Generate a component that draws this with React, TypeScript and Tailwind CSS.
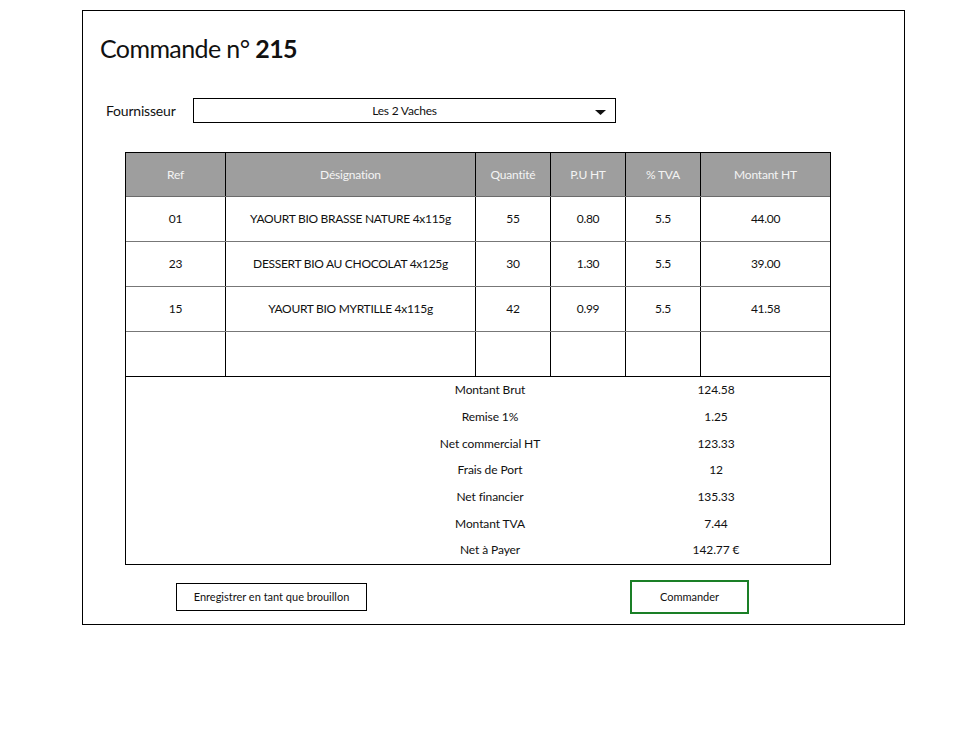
import React from "react";

const rows = [
  ["01", "YAOURT BIO BRASSE NATURE 4x115g", "55", "0.80", "5.5", "44.00"],
  ["23", "DESSERT BIO AU CHOCOLAT 4x125g", "30", "1.30", "5.5", "39.00"],
  ["15", "YAOURT BIO MYRTILLE 4x115g", "42", "0.99", "5.5", "41.58"],
  ["", "", "", "", "", ""],
];

const headers = ["Ref", "Désignation", "Quantité", "P.U HT", "% TVA", "Montant HT"];
const widths = ["w-[100px]", "w-[250px]", "w-[75px]", "w-[75px]", "w-[75px]", "flex-1"];

const summary = [
  ["Montant Brut", "124.58"],
  ["Remise 1%", "1.25"],
  ["Net commercial HT", "123.33"],
  ["Frais de Port", "12"],
  ["Net financier", "135.33"],
  ["Montant TVA", "7.44"],
  ["Net à Payer", "142.77 €"],
];

export default function App() {
  return (
    <div
      className="w-[954px] h-[735px] bg-white pt-[10px] pl-[82px] text-[#111]"
      style={{ fontFamily: "Lato, 'Open Sans', sans-serif" }}
    >
      <div className="w-[823px] h-[615px] border border-black flex flex-col">
        <div className="mt-[21px] ml-[17px] h-[32px] leading-[32px] text-[25px] tracking-[-0.6px]">
          Commande n° <span className="font-bold">215</span>
        </div>

        <div className="mt-[34px] flex items-center h-[25px]">
          <div className="ml-[23px] w-[87px] text-[14px] tracking-[-0.2px]">Fournisseur</div>
          <div className="relative w-[423px] h-[25px] border border-black flex items-center justify-center text-[12px] tracking-[-0.2px]">
            Les 2 Vaches
            <svg className="absolute right-[9px] top-[11px]" width="11" height="5" viewBox="0 0 11 5">
              <path d="M0 0 H11 L5.5 5 Z" fill="#111" />
            </svg>
          </div>
        </div>

        <div className="mt-[29px] ml-[42px] w-[706px] border border-black">
          <div className="flex h-[44px] bg-[#9e9e9e] border-b border-[#6b6b6b]">
            {headers.map((h, i) => (
              <div
                key={i}
                className={`${widths[i]} ${i < 5 ? "border-r border-black" : ""} flex items-center justify-center text-[12px] tracking-[-0.2px] text-[#f4f4f4]`}
              >
                {h}
              </div>
            ))}
          </div>
          {rows.map((r, ri) => (
            <div
              key={ri}
              className={`flex ${ri === 3 ? "h-[45px] border-b border-black" : "h-[45px] border-b border-[#777]"}`}
            >
              {r.map((c, i) => (
                <div
                  key={i}
                  className={`${widths[i]} ${i < 5 ? "border-r border-black" : ""} flex items-center justify-center text-[12px] tracking-[-0.3px]`}
                >
                  {c}
                </div>
              ))}
            </div>
          ))}
          <div className="flex flex-col">
            {summary.map(([l, v], i) => (
              <div key={i} className="flex h-[26.7px] items-center text-[12px] tracking-[-0.1px]">
                <div className="ml-[289px] w-[150px] text-center">{l}</div>
                <div className="ml-[76px] w-[150px] text-center">{v}</div>
              </div>
            ))}
          </div>
        </div>

        <div className="mt-[15px] flex items-center h-[34px]">
          <div className="ml-[93px] w-[191px] h-[28px] border border-black flex items-center justify-center text-[11px]">
            Enregistrer en tant que brouillon
          </div>
          <div className="ml-[263px] w-[119px] h-[34px] border-2 border-[#1a7f26] flex items-center justify-center text-[11px]">
            Commander
          </div>
        </div>
      </div>
    </div>
  );
}
